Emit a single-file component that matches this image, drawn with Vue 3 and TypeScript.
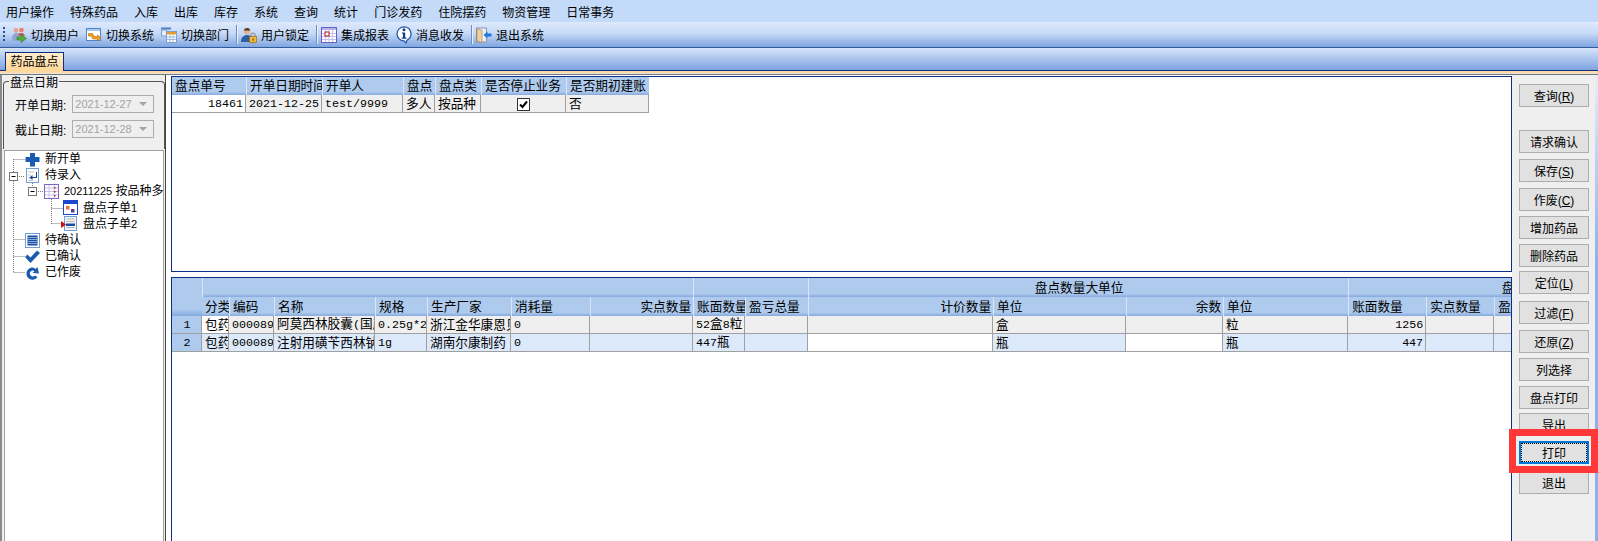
<script setup lang="ts">
const menus = ['用户操作','特殊药品','入库','出库','库存','系统','查询','统计','门诊发药','住院摆药','物资管理','日常事务']

function parts(text: string) {
  return (text.match(/[\x20-\x7e]+|[^\x20-\x7e]+/g) || []).map(t => ({ t, latin: /^[\x20-\x7e]/.test(t) }))
}

const topCols = [74, 76, 81, 32, 46, 85, 83]
const topHead = ['盘点单号','开单日期时间','开单人','盘点','盘点类','是否停止业务','是否期初建账']

const lowCols = [30, 27, 45, 101, 52, 84, 79, 103, 52, 63, 185, 133, 97, 125, 78, 68, 248]
const lowHead = [
  { t: '分类' }, { t: '编码' }, { t: '名称' }, { t: '规格' }, { t: '生产厂家' }, { t: '消耗量' }, { t: '实点数量', r: true },
  { t: '账面数量' }, { t: '盈亏总量' }, { t: '计价数量', r: true }, { t: '单位' }, { t: '余数', r: true }, { t: '单位' },
  { t: '账面数量' }, { t: '实点数量' }, { t: '盈亏总量' }
]
const lowRows = [
  { n: 1, alt: false, cells: [
    { t: '包药', w: true }, { t: '000089' }, { t: '阿莫西林胶囊(国产)' }, { t: '0.25g*24' }, { t: '浙江金华康恩贝' }, { t: '0' }, { t: '' },
    { t: '52盒8粒' }, { t: '' }, { t: '' }, { t: '盒' }, { t: '' }, { t: '粒' }, { t: '1256', r: true }, { t: '' }, { t: '' }
  ] },
  { n: 2, alt: true, cells: [
    { t: '包药' }, { t: '000089' }, { t: '注射用磺苄西林钠' }, { t: '1g' }, { t: '湖南尔康制药' }, { t: '0' }, { t: '' },
    { t: '447瓶' }, { t: '' }, { t: '', w: true }, { t: '瓶' }, { t: '', w: true }, { t: '瓶' }, { t: '447', r: true }, { t: '' }, { t: '' }
  ] }
]

const tops = [84, 130, 159, 188, 216, 244, 271, 301, 330, 358, 386, 413, 441, 471]
const labels = [
  { t: '查询', k: 'R' }, { t: '请求确认' }, { t: '保存', k: 'S' }, { t: '作废', k: 'C' }, { t: '增加药品' }, { t: '删除药品' },
  { t: '定位', k: 'L' }, { t: '过滤', k: 'F' }, { t: '还原', k: 'Z' }, { t: '列选择' }, { t: '盘点打印' }, { t: '导出' },
  { t: '打印', focus: true }, { t: '退出' }
]
const buttons = labels.map((b, i) => ({ ...b, gap: tops[i] - (i ? tops[i - 1] + 23 : 75) }))
</script>

<template>
  <div class="app">
    <div class="menubar">
      <span v-for="m in menus" :key="m" class="menu-item">{{ m }}</span>
    </div>

    <div class="toolbar">
      <span class="grip"></span>
      <span class="tool">
        <svg width="16" height="16" viewBox="0 0 16 16"><circle cx="5" cy="3.5" r="2.4" fill="#e8a28c"/><path d="M1 12c0-4 2-6 4-6s3 1.500 3.500 3L6 14H2z" fill="#8ea6d4"/><circle cx="10.500" cy="3" r="2.300" fill="#e87f6a"/><path d="M7 7c1-1 5-1.500 6 0l1 2H8z" fill="#c8604e"/><path d="M6 10h4V7.500L15.500 11.500 10 15.500V13H6z" fill="#4fae3c" stroke="#2f7a24" stroke-width=".6"/></svg>
        切换用户
      </span>
      <span class="tool">
        <svg width="16" height="16" viewBox="0 0 16 16"><rect x=".5" y="1.500" width="14" height="12" fill="#fff" stroke="#4f86c6"/><rect x="1" y="2" width="13" height="2" fill="#a9c8ea"/><path d="M2.500 6.500h4l2 3h3V8l3.500 3-3.500 3v-2H7l-2-3H2.500z" fill="#f0a020" stroke="#b86a08" stroke-width=".6"/></svg>
        切换系统
      </span>
      <span class="tool">
        <svg width="16" height="16" viewBox="0 0 16 16"><rect x="0" y="0.500" width="10" height="2" fill="#4f7fc0"/><rect x="0.500" y="3" width="5" height="6" fill="#e4eefa" stroke="#7e9fcc"/><rect x="5.500" y="4.500" width="10" height="11" fill="#fff" stroke="#7e9fcc"/><rect x="6" y="5" width="9" height="2.500" fill="#e89a2c"/><path d="M6 10h9M6 12.500h9M9 8v7M12 8v7" stroke="#9db8da" stroke-width="1"/></svg>
        切换部门
      </span>
      <span class="sep"></span>
      <span class="tool">
        <svg width="16" height="16" viewBox="0 0 16 16"><circle cx="6" cy="4" r="3.200" fill="#e6b08c"/><path d="M2.800 3.500C3.500 0 9 0 9.200 3.500z" fill="#4a3a30"/><path d="M0 15c0-5 3-7 6-7s4 1 5 2v5z" fill="#2e5ea8"/><rect x="8.500" y="9.500" width="7" height="6" fill="#eeb93c" stroke="#9a6f10" stroke-width=".7"/><path d="M10 9.500V8a2 2 0 0 1 4 0v1.500" fill="none" stroke="#8d8d8d" stroke-width="1.100"/><rect x="11.500" y="11.500" width="1.200" height="2.200" fill="#7a5408"/></svg>
        用户锁定
      </span>
      <span class="sep"></span>
      <span class="tool">
        <svg width="16" height="16" viewBox="0 0 16 16"><rect x=".5" y=".5" width="15" height="15" fill="#fff" stroke="#6a5fc0"/><rect x="1" y="1" width="14" height="2" fill="#b9b3ea"/><path d="M1 6.500h14M1 9.500h14M1 12.500h14M4.500 3v12M8 3v12M11.500 3v12" stroke="#c3bfee" stroke-width="1"/><rect x="4" y="5" width="4" height="4" fill="#fff" stroke="#b01818"/></svg>
        集成报表
      </span>
      <span class="tool">
        <svg width="16" height="18" viewBox="0 0 16 18"><path d="M8 .8a7 7 0 0 1 3 13.300L10 17l-2-2.200A7 7 0 0 1 8 .8z" fill="#fff" stroke="#2a5ea8" stroke-width="1.300"/><circle cx="8" cy="3.800" r="1.500" fill="#123f8f"/><path d="M6 6.500h3.200v5H10.500v1.300H5.800v-1.300H7v-3.800H6z" fill="#123f8f"/></svg>
        消息收发
      </span>
      <span class="sep"></span>
      <span class="tool">
        <svg width="16" height="16" viewBox="0 0 16 16"><rect x=".5" y="1" width="10" height="14" fill="#e8eef8" stroke="#8a95b0"/><path d="M1 1.500l5 2v12l-5-1.500z" fill="#f2cf9c" stroke="#a08050" stroke-width=".6"/><path d="M7.500 8l4-3.500V6.500H15.500v3h-4v2z" fill="#1f78d8"/></svg>
        退出系统
      </span>
    </div>

    <div class="tabstrip">
      <span class="tab">药品盘点</span>
    </div>

    <div class="main">
      <aside class="left">
        <div class="left-inner">
          <fieldset class="group">
            <legend>盘点日期</legend>
            <div class="form-row">
              <span>开单日期:</span>
              <span class="select"><span class="value">2021-12-27</span><i class="caret"></i></span>
            </div>
            <div class="form-row">
              <span>截止日期:</span>
              <span class="select"><span class="value">2021-12-28</span><i class="caret"></i></span>
            </div>
          </fieldset>

          <div class="tree">
            <svg class="lines" width="158" height="130" viewBox="0 0 158 130">
              <g stroke="#777" stroke-dasharray="1 1" fill="none">
                <path d="M8.500 8V121M8.500 8.500H20M12 25.500H20M8.500 88.500H20M8.500 105.500H20M8.500 121.500H20"/>
                <path d="M27.500 30V36M31 40.500H39"/>
                <path d="M46.500 46V73M46.500 57.500H58M46.500 72.500H57"/>
              </g>
              <rect x="4.500" y="21.500" width="8" height="8" fill="#fff" stroke="#777"/>
              <path d="M6.500 25.500h4" stroke="#000"/>
              <rect x="23.500" y="36.500" width="8" height="8" fill="#fff" stroke="#777"/>
              <path d="M25.500 40.500h4" stroke="#000"/>
            </svg>

            <div class="row l0">
              <svg class="ico" viewBox="0 0 15 15"><path d="M5 1h5v4h4.500v5H10v4.500H5V10H.5V5H5z" fill="#1a5cb0"/></svg>
              <span>新开单</span>
            </div>
            <div class="row l0">
              <svg class="ico" viewBox="0 0 15 15"><rect x="1.500" y=".5" width="12" height="14" fill="#fff" stroke="#6f9fd6"/><path d="M3 4h6M3 7h3M3 10h3M3 12.500h5" stroke="#c5c5c5"/><path d="M11 4v5H7.500V7L4.500 9.500 7.500 12v-2h4.500V4z" fill="#123f8f"/></svg>
              <span>待录入</span>
            </div>
            <div class="row l1">
              <svg class="ico" viewBox="0 0 15 15"><rect x=".5" y=".5" width="14" height="14" fill="#fff" stroke="#7a68c8"/><path d="M1 4h13M1 7.500h13M1 11h13M5 1v13M10 1v13" stroke="#c8c2ee"/><path d="M10 3h1.500v1.500H10zM10 7h1.500v1.500H10zM10 11h1.500v1.500H10z" fill="#c01818"/></svg>
              <span><span class="sm">20211225</span> 按品种多</span>
            </div>
            <div class="row l2">
              <svg class="ico" viewBox="0 0 15 15"><rect x=".5" y=".5" width="14" height="14" fill="#fff" stroke="#1c45d0"/><rect x="1" y="1" width="13" height="3" fill="#1c45d0"/><rect x="3" y="6" width="3.500" height="3.500" fill="#f0703c"/><rect x="8" y="9" width="3.500" height="3.500" fill="#5a3a9c"/></svg>
              <span>盘点子单<span class="sm">1</span></span>
            </div>
            <div class="row l2">
              <svg class="ico" viewBox="0 0 15 15"><rect x="1.500" y=".5" width="12" height="14" fill="#f4f4f4" stroke="#6f9fd6"/><path d="M3.500 3h8M3.500 5.500h8M3.500 11.500h8" stroke="#b5b5b5"/><rect x="3" y="7.500" width="9" height="2.500" fill="#1a4ea0"/></svg>
              <span>盘点子单<span class="sm">2</span></span>
              <svg class="pointer" width="5" height="7" viewBox="0 0 5 7"><path d="M0 0l5 3.500L0 7z" fill="#c81010"/></svg>
            </div>
            <div class="row l0">
              <svg class="ico" viewBox="0 0 15 15"><rect x=".5" y=".5" width="14" height="14" fill="#fff" stroke="#6f9fd6"/><rect x="2.500" y="2.500" width="10" height="10" fill="#1a4ea0"/><path d="M3 4.500h9M3 6.500h9M3 8.500h9M3 10.500h9" stroke="#8aaee0"/></svg>
              <span>待确认</span>
            </div>
            <div class="row l0">
              <svg class="ico" viewBox="0 0 15 15"><path d="M0 8l2.500-2.500L5.500 8.500 12 1.500 15 4 5.500 14z" fill="#1a5cb0"/></svg>
              <span>已确认</span>
            </div>
            <div class="row l0">
              <svg class="ico" viewBox="0 0 15 15"><path d="M1.500 9a5.500 5.500 0 0 1 9-5l2-2 1.500 6.500-6.500-.5 2-2a3 3 0 0 0-4.500 1.500 3 3 0 0 0 5 3l2.500 1.500A6 6 0 0 1 1.500 9z" fill="#1a5cb0"/></svg>
              <span>已作废</span>
            </div>
          </div>
        </div>
      </aside>

      <section class="center">
        <div class="panel upper">
          <table class="grid">
            <colgroup><col v-for="(w, i) in topCols" :key="i" :style="{ width: w + 'px' }"></colgroup>
            <thead>
              <tr class="h18"><th v-for="h in topHead" :key="h">{{ h }}</th></tr>
            </thead>
            <tbody>
              <tr class="h18">
                <td class="white right"><span class="latin">18461</span></td>
                <td><span class="latin">2021-12-25</span></td>
                <td><span class="latin">test/9999</span></td>
                <td>多人</td>
                <td>按品种</td>
                <td class="center-cell">
                  <svg class="check" width="13" height="13" viewBox="0 0 13 13"><rect x=".5" y=".5" width="12" height="12" fill="#fff" stroke="#333"/><path d="M3 6.500l2.500 2.500L10 3.500" fill="none" stroke="#000" stroke-width="2"/></svg>
                </td>
                <td>否</td>
              </tr>
            </tbody>
          </table>
        </div>

        <div class="panel lower">
          <table class="grid wide">
            <colgroup><col v-for="(w, i) in lowCols" :key="i" :style="{ width: w + 'px' }"></colgroup>
            <thead>
              <tr class="h-group">
                <th rowspan="2" class="corner"></th>
                <th colspan="7"></th>
                <th colspan="2"></th>
                <th colspan="4" class="mid">盘点数量大单位</th>
                <th colspan="3" class="mid">盘点数量小单位</th>
              </tr>
              <tr class="h-col">
                <th v-for="(h, i) in lowHead" :key="i" :class="{ right: h.r }">{{ h.t }}</th>
              </tr>
            </thead>
            <tbody>
              <tr v-for="r in lowRows" :key="r.n" class="h18" :class="{ alt: r.alt }">
                <td class="indicator">{{ r.n }}</td>
                <td v-for="(c, i) in r.cells" :key="i" :class="{ white: c.w, right: c.r }">
                  <template v-for="(p, j) in parts(c.t)" :key="j">
                    <span v-if="p.latin" class="latin">{{ p.t }}</span>
                    <template v-else>{{ p.t }}</template>
                  </template>
                </td>
              </tr>
            </tbody>
          </table>
        </div>
      </section>

      <aside class="actions">
        <button
          v-for="b in buttons"
          :key="b.t"
          type="button"
          class="btn"
          :class="{ focus: b.focus }"
          :style="{ marginTop: b.gap + 'px' }"
        >
          <span class="btn-text">{{ b.t }}<template v-if="b.k">(<u>{{ b.k }}</u>)</template></span>
        </button>
        <div class="callout"></div>
      </aside>
      <div class="edge"></div>
    </div>
  </div>
</template>

<style scoped>
.app {
  width: 1598px;
  height: 541px;
  display: flex;
  flex-direction: column;
  overflow: hidden;
  font: 12px "Liberation Sans", "Noto Sans CJK SC", sans-serif;
  color: #000;
  background: #efefef;
}
.menubar {
  height: 22px;
  flex: none;
  display: flex;
  align-items: center;
  padding-left: 6px;
  background: #c3daf9;
}
.menu-item { margin-right: 16px; }
.toolbar {
  height: 26px;
  flex: none;
  display: flex;
  align-items: center;
  box-sizing: border-box;
  padding-left: 3px;
  background: linear-gradient(#dde9fd, #c7daf7 45%, #7fa5e0);
  border-bottom: 1px solid #2f5a9c;
  border-radius: 0 5px 0 0;
}
.grip {
  width: 2px;
  height: 16px;
  margin-right: 6px;
  background: repeating-linear-gradient(#274f96 0 2px, transparent 2px 4px);
}
.tool {
  display: flex;
  align-items: center;
  gap: 4px;
  margin-right: 7px;
}
.tool svg { flex: none; }
.sep {
  width: 1px;
  height: 19px;
  margin-right: 4px;
  background: #6f8fbe;
  box-shadow: 1px 0 0 #e8f0fc;
}
.tabstrip {
  height: 26px;
  flex: none;
  box-sizing: border-box;
  padding: 4px 0 0 5px;
  background:
    linear-gradient(#0d2f86, #0d2f86) 0 22px / 100% 1px no-repeat,
    linear-gradient(#ffd9a0, #ffd9a0) 0 23px / 100% 2px no-repeat,
    linear-gradient(#e4e4e4, #e4e4e4) 0 25px / 100% 1px no-repeat,
    linear-gradient(#d6e5fb, #7fa3e0) 0 0 / 100% 22px no-repeat;
}
.tab {
  display: block;
  box-sizing: border-box;
  width: 59px;
  height: 19px;
  line-height: 18px;
  text-align: center;
  border: 1px solid #0d2f86;
  border-bottom: 0;
  background: linear-gradient(#ffeecb, #ffd797);
}
.main {
  flex: 1;
  min-height: 0;
  display: flex;
  border-top: 1px solid #777;
}
.left {
  width: 171px;
  flex: none;
  display: flex;
  background: #fff;
}
.left-inner {
  width: 166px;
  box-sizing: border-box;
  display: flex;
  flex-direction: column;
  background: #efefef;
  border-left: 2px solid #8a8a8a;
  border-right: 1px solid #444;
}
.group {
  margin: 0 0 0 1px;
  padding: 8px 0 0 11px;
  height: 74px;
  box-sizing: border-box;
  border: 1px solid #555;
  border-bottom: 0;
  border-radius: 4px 4px 0 0;
  flex: none;
  min-width: 0;
  width: 162px;
}
.group legend {
  margin-left: -6px;
  padding: 0 1px;
  line-height: 12px;
  transform: translateY(2px);
}
.form-row {
  display: flex;
  align-items: center;
  gap: 6px;
  height: 18px;
  margin-bottom: 7px;
  white-space: nowrap;
}
.select {
  width: 82px;
  height: 18px;
  box-sizing: border-box;
  display: flex;
  align-items: center;
  justify-content: space-between;
  padding: 0 6px 0 2px;
  border: 1px solid #adadad;
  color: #a3a3a3;
  font-size: 11px;
}
.caret {
  width: 0;
  height: 0;
  border: 4px solid transparent;
  border-top: 4px solid #a3a3a3;
  border-bottom: 0;
}
.tree {
  position: relative;
  flex: 1;
  margin: 1px 0 0 2px;
  width: 160px;
  box-sizing: border-box;
  border: 1px solid #a0a0a0;
  border-bottom: 0;
  background: #fff;
  overflow: hidden;
  white-space: nowrap;
}
.lines { position: absolute; left: 0; top: 0; }
.row {
  position: relative;
  height: 16.2px;
  display: flex;
  align-items: center;
  line-height: 16px;
}
.l0 { padding-left: 20px; }
.l1 { padding-left: 39px; }
.l2 { padding-left: 58px; }
.ico { width: 15px; height: 15px; flex: none; margin-right: 5px; }
.pointer { position: absolute; left: 56px; top: 5px; }
.sm { font-size: 11px; }

.center {
  width: 1341px;
  flex: none;
  display: flex;
  flex-direction: column;
  background: #fff;
  padding-top: 1px;
  box-sizing: border-box;
}
.panel {
  box-sizing: border-box;
  border: 1px solid #0d2f86;
  background: #fff;
  overflow: hidden;
}
.upper { height: 196px; flex: none; }
.lower { flex: 1; min-height: 0; margin-top: 5px; border-bottom: 0; }
.grid {
  table-layout: fixed;
  border-collapse: separate;
  border-spacing: 0;
  width: 477px;
  font-size: 12.67px;
}
.wide { width: 1570px; }
.grid th, .grid td {
  padding: 0 2px 0 3px;
  overflow: hidden;
  white-space: nowrap;
  font-weight: 400;
  text-align: left;
  box-sizing: border-box;
  line-height: 16px;
}
.grid th {
  background: linear-gradient(#aecbee 82%, #86a9de);
  border-left: 1px solid #d9e6f9;
}
.grid th:first-child { border-left: 0; }
.grid td {
  background: #efefef;
  border-right: 1px solid #a0a0a0;
  border-bottom: 1px solid #a0a0a0;
}
.grid tr.alt td { background: #dce9fb; }
.grid td.white, .grid tr.alt td.white { background: #fff; }
.grid td.indicator, .grid tr.alt td.indicator {
  background: #aecbee;
  text-align: center;
  font-family: "Liberation Mono", monospace;
  font-size: 11.67px;
}
.grid .right { text-align: right; }
.grid .mid { text-align: center; }
.grid .corner { padding: 0; }
.center-cell, .grid td.center-cell { text-align: center; padding: 0; }
.check { display: inline-block; vertical-align: middle; }
.latin { font-family: "Liberation Mono", monospace; font-size: 11.67px; }
.h18 { height: 18px; }
.h-group { height: 19px; }
.h-col { height: 19px; }

.actions {
  position: relative;
  width: 83px;
  flex: none;
  display: flex;
  flex-direction: column;
  align-items: flex-start;
  padding-left: 7px;
  box-sizing: border-box;
  background: #efefef;
}
.btn {
  flex: none;
  width: 70px;
  height: 23px;
  padding: 0;
  border: 1px solid #adadad;
  background: #e1e1e1;
  font: inherit;
  color: #000;
}
.focus {
  position: relative;
  z-index: 2;
  border: 2px solid #0078d7;
}
.focus .btn-text {
  display: flex;
  align-items: center;
  justify-content: center;
  height: 100%;
  box-sizing: border-box;
  border: 1px dotted #000;
}
.callout {
  position: absolute;
  left: -3px;
  top: 354px;
  width: 89px;
  height: 44px;
  box-sizing: border-box;
  border: 7px solid #ff3838;
  background: #efefef;
  z-index: 1;
}
.edge {
  width: 3px;
  flex: none;
  background: linear-gradient(#e8eef8, #8fb0ea 40%);
}
</style>

<style>
html, body { margin: 0; padding: 0; overflow: hidden; }
</style>
